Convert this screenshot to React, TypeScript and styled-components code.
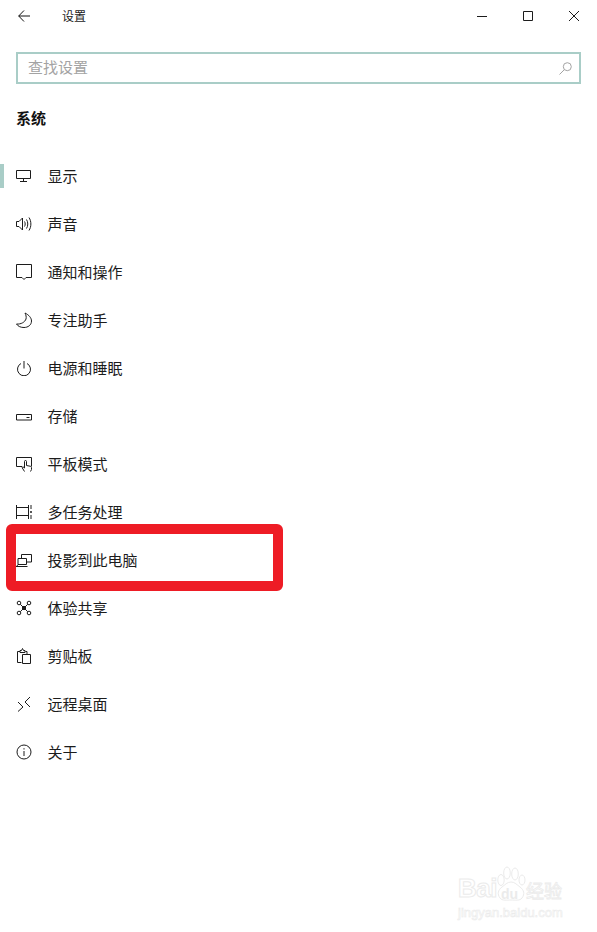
import React from "react";
import styled, { createGlobalStyle } from "styled-components";

const GlobalStyle = createGlobalStyle`
  html, body {
    margin: 0;
    padding: 0;
    background: #fff;
  }
  * {
    box-sizing: border-box;
  }
`;

const FONT = `"Noto Sans CJK SC", "Liberation Sans", sans-serif`;

const Page = styled.div`
  position: relative;
  width: 597px;
  height: 932px;
  overflow: hidden;
  background: #fff;
  font-family: ${FONT};
  color: #1a1a1a;
`;

const TitleBar = styled.div`
  height: 32px;
  display: flex;
  align-items: center;
  padding-left: 18px;
`;

const BackButton = styled.div`
  width: 44px;
  display: flex;
  align-items: center;
`;

const WindowTitle = styled.div`
  font-size: 12px;
  line-height: 32px;
  flex: 1;
`;

const WindowControls = styled.div`
  display: flex;
  gap: 36px;
  padding-right: 18px;
`;

const SearchBox = styled.div`
  margin: 20px 16px 0;
  height: 32px;
  border: 2px solid #a9cdc7;
  display: flex;
  align-items: center;
  justify-content: space-between;
  padding: 0 7px 0 10px;
`;

const SearchHint = styled.span`
  font-size: 15px;
  color: #a3a3a3;
  margin-bottom: 3px;
`;

const SectionTitle = styled.div`
  margin: 20px 0 0 16px;
  height: 28px;
  font-size: 15px;
  line-height: 28px;
  font-weight: 700;
  color: #111;
`;

const NavList = styled.div`
  margin-top: 20px;
  display: flex;
  flex-direction: column;
`;

const NavRow = styled.div<{ $active?: boolean }>`
  position: relative;
  height: 48px;
  display: flex;
  align-items: center;
  padding-left: 16px;
  font-size: 15px;
  color: #1c1c1c;

  &::before {
    content: "";
    display: ${(p) => (p.$active ? "block" : "none")};
    position: absolute;
    left: 0;
    top: 12px;
    width: 4px;
    height: 24px;
    background: #a9cdc7;
  }
`;

const NavIcon = styled.span`
  width: 31.5px;
  height: 16px;
  display: flex;
`;

const NavLabel = styled.span`
  margin-bottom: 2px;
`;

const Highlight = styled.div`
  position: absolute;
  left: 6px;
  top: 524px;
  width: 277px;
  height: 67px;
  border: 10px solid #ee1c25;
  border-radius: 6px;
`;

const Watermark = styled.div`
  position: absolute;
  left: 458px;
  top: 866px;
  width: 110px;
  height: 56px;
`;

const WatermarkLogo = styled.div`
  display: flex;
  align-items: flex-end;
  height: 36px;
`;

const WatermarkBai = styled.span`
  font-family: "Liberation Sans", sans-serif;
  font-size: 26px;
  line-height: 28px;
  font-weight: 700;
  letter-spacing: -0.5px;
  color: #fff;
  -webkit-text-stroke: 1px #ebebeb;
  width: 39px;
`;

const WatermarkPaw = styled.div`
  position: relative;
  width: 29px;
  height: 36px;
`;

const WatermarkDu = styled.span`
  position: absolute;
  left: 4px;
  top: 20px;
  font-family: "Liberation Sans", sans-serif;
  font-size: 14px;
  line-height: 16px;
  font-weight: 700;
  color: #ebebeb;
`;

const WatermarkCn = styled.span`
  font-size: 18px;
  line-height: 24px;
  color: #fff;
  -webkit-text-stroke: 0.8px #ebebeb;
`;

const WatermarkUrl = styled.div`
  margin-top: 4px;
  font-family: "Liberation Sans", sans-serif;
  font-size: 13px;
  line-height: 14px;
  color: #fff;
  -webkit-text-stroke: 0.6px #ebebeb;
  white-space: nowrap;
`;

type IconProps = { children: React.ReactNode };

const Glyph = ({ children }: IconProps) => (
  <svg
    width={16}
    height={16}
    viewBox="0 0 16 16"
    fill="none"
    stroke="#1c1c1c"
    strokeWidth="1"
  >
    {children}
  </svg>
);

const icons: Record<string, React.ReactNode> = {
  display: (
    <>
      <path d="M.5 2.500h14v8H.5z" />
      <path d="M7.500 10.500v3M4 13.500h7" />
    </>
  ),
  sound: (
    <>
      <path d="M.5 5.500v5h2.500l3.500 3.500V2L3 5.500z" />
      <path d="M8.500 5.500c.9 1.500.9 3.500 0 5M10.500 3.500c1.700 2.500 1.700 6.500 0 9M13 1.500c2.500 3.800 2.500 9.200 0 13" />
    </>
  ),
  notice: <path d="M.5.500h15v13H10l-2 2-2-2H.5z" />,
  moon: (
    <path d="M9 1c4 2 6.500 5 6.500 8 0 4-3.500 6.500-7.500 6.500-3 0-6-1-7.500-3.500 4.500.5 8.500-2 9.500-5 .5-2 0-4-1-6z" />
  ),
  power: (
    <>
      <path d="M5 3.500A6.500 6.500 0 1 0 11 3.500" />
      <path d="M8 1v7.500" />
    </>
  ),
  storage: (
    <>
      <path d="M.5 6.500h15v5.500H.5z" />
      <path d="M10.500 9.500h3" />
    </>
  ),
  tablet: (
    <>
      <path d="M6 10.500H.5v-9h15v9" />
      <path d="M8.500 15.500L6 11.500l1-.7 1.500 1.200V5.500a1 1 0 0 1 2 0v4l3.500.7c1 .2 1.500.7 1.500 1.500v1.800l-1 2" />
    </>
  ),
  tasks: (
    <>
      <path d="M.5 1v14M12.500 1v14M.5 3.500h12M.5 11.500h12" />
      <path d="M15 1v4M15 11v4" />
      <circle cx="15" cy="8" r="1" fill="#1c1c1c" stroke="none" />
    </>
  ),
  project: (
    <>
      <path d="M5.500 6.500v-4h10V10h-5" />
      <path d="M2 6.500h8.500v6H2zM0 14.500h11.500M2 12.500L.5 14.500" />
    </>
  ),
  share: (
    <>
      <circle cx="3" cy="3" r="1.800" />
      <circle cx="13" cy="3" r="1.800" />
      <circle cx="3" cy="13" r="1.800" />
      <circle cx="13" cy="13" r="1.800" />
      <path d="M4.300 4.300l7.400 7.400M11.700 4.300l-7.400 7.400M8 6l2 2-2 2-2-2z" />
    </>
  ),
  clipboard: (
    <>
      <path d="M5.500 14.500h-4v-11H4M9.500 3.500H11v3" />
      <path d="M4 4.500V2.500h1.500L6.500.5h0l1 2H9v2z" />
      <path d="M6.500 6.500h8v9h-8z" />
    </>
  ),
  remote: <path d="M2 6l5 5-5 4.500M14 1L9 6l5 5" />,
  about: (
    <>
      <circle cx="8" cy="8" r="7" />
      <path d="M8 7v5" />
      <path d="M8 4.200v1.300" />
    </>
  ),
};

const items = [
  { key: "display", label: "显示", active: true },
  { key: "sound", label: "声音" },
  { key: "notice", label: "通知和操作" },
  { key: "moon", label: "专注助手" },
  { key: "power", label: "电源和睡眠" },
  { key: "storage", label: "存储" },
  { key: "tablet", label: "平板模式" },
  { key: "tasks", label: "多任务处理" },
  { key: "project", label: "投影到此电脑" },
  { key: "share", label: "体验共享" },
  { key: "clipboard", label: "剪贴板" },
  { key: "remote", label: "远程桌面" },
  { key: "about", label: "关于" },
];

export default function App() {
  return (
    <>
      <GlobalStyle />
      <Page>
        <TitleBar>
          <BackButton>
            <svg width="12" height="12" viewBox="0 0 12 12" fill="none" stroke="#111">
              <path d="M6 .5L.7 6 6 11.500M.7 6H12" />
            </svg>
          </BackButton>
          <WindowTitle>设置</WindowTitle>
          <WindowControls>
            <svg width="10" height="10" viewBox="0 0 10 10" fill="none" stroke="#1c1c1c">
              <path d="M0 5.500h10" />
            </svg>
            <svg width="10" height="10" viewBox="0 0 10 10" fill="none" stroke="#1c1c1c">
              <path d="M.5.500h9v9h-9z" />
            </svg>
            <svg width="10" height="10" viewBox="0 0 10 10" fill="none" stroke="#1c1c1c">
              <path d="M0 0l10 10M10 0L0 10" />
            </svg>
          </WindowControls>
        </TitleBar>
        <SearchBox>
          <SearchHint>查找设置</SearchHint>
          <svg width="13" height="13" viewBox="0 0 13 13" fill="none" stroke="#a3a3a3">
            <circle cx="8.300" cy="4.700" r="4" />
            <path d="M5.400 7.600L.5 12.500" />
          </svg>
        </SearchBox>
        <SectionTitle>系统</SectionTitle>
        <NavList>
          {items.map((item) => (
            <NavRow key={item.key} $active={item.active}>
              <NavIcon>
                <Glyph>{icons[item.key]}</Glyph>
              </NavIcon>
              <NavLabel>{item.label}</NavLabel>
            </NavRow>
          ))}
        </NavList>
        <Highlight />
        <Watermark>
          <WatermarkLogo>
            <WatermarkBai>Bai</WatermarkBai>
            <WatermarkPaw>
              <svg width="29" height="36" viewBox="0 0 29 36" fill="#fff" stroke="#ebebeb">
                <ellipse cx="4" cy="14" rx="3.200" ry="5.500" />
                <ellipse cx="10" cy="7" rx="3.300" ry="6" />
                <ellipse cx="18" cy="8" rx="3.300" ry="6" />
                <ellipse cx="25" cy="14" rx="3" ry="5" />
                <path d="M14 16c4 0 6 3 9 5 4 3 5 7 2 11-2 3-7 2-11 2s-9 1-11-2c-3-4-2-8 2-11 3-2 5-5 9-5z" />
              </svg>
              <WatermarkDu>du</WatermarkDu>
            </WatermarkPaw>
            <WatermarkCn>经验</WatermarkCn>
          </WatermarkLogo>
          <WatermarkUrl>jingyan.baidu.com</WatermarkUrl>
        </Watermark>
      </Page>
    </>
  );
}
